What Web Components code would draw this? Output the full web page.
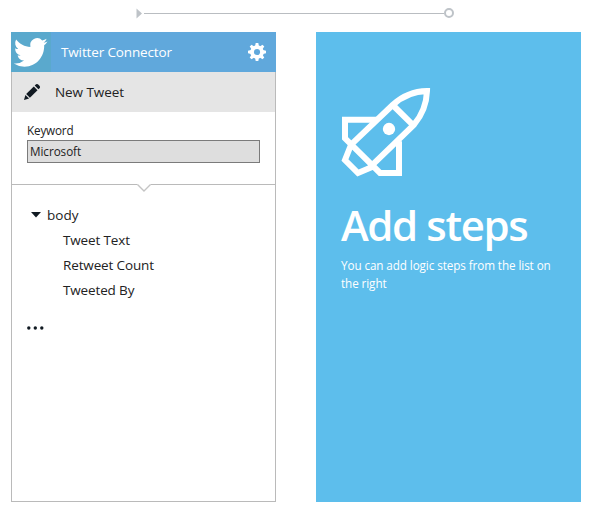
<!DOCTYPE html>
<html lang="en"><head><meta charset="utf-8"><title>Logic steps</title>
<style>
html,body{margin:0;background:#fff}
body{width:591px;height:512px;overflow:hidden;font-family:"Open Sans","Noto Sans",sans-serif;color:#222}
</style></head><body>
<flow-board>
<flow-connector slot="connector"></flow-connector>
<connector-card name="Twitter Connector" action="New Tweet">
<keyword-field label="Keyword" value="Microsoft"></keyword-field>
<output-tree slot="outputs" name="body">
<tree-item>Tweet Text</tree-item><tree-item>Retweet Count</tree-item><tree-item>Tweeted By</tree-item>
</output-tree>
</connector-card>
<steps-card><span slot="title">Add steps</span>You can add logic steps from the list on the right</steps-card>
</flow-board>
<script>
const define=(name,render)=>customElements.define(name,class extends HTMLElement{
  constructor(){super();this.attachShadow({mode:'open'}).innerHTML=render(this)}
});
define('flow-board',()=>`<style>
:host{display:grid;grid-template:32px 470px/265px 265px;column-gap:40px;padding:0 10px 10px 11px;box-sizing:border-box}
.top{grid-column:1/3}</style><div class="top"><slot name="connector"></slot></div><slot></slot>`);
define('flow-connector',()=>`<style>:host{display:block;height:32px;padding-left:125px}svg{display:block}</style>
<svg width="320" height="32"><path d="M.5 8.5L6 13.5L.5 18.5Z" fill="#bec3c8"/><path d="M8 13.5H308" stroke="#b9bdc1"/><circle cx="313" cy="13" r="4" fill="#fff" stroke="#bec3c8" stroke-width="2"/></svg>`);
define('connector-card',el=>`<style>
:host{display:flex;flex-direction:column;box-sizing:border-box;border:1px solid #bababa;border-top:0;background:#fff}
header{display:flex;align-items:center;height:40px;margin:0 -1px;background:#60a8dc;color:#fff;font-size:13.5px;flex:none}
.logo{width:40px;height:40px;background:#5aa9cd}svg{display:block}
.name{margin-left:10px;letter-spacing:-.14px;flex:1}.gear{margin-right:9px}
.action{display:flex;align-items:center;height:40px;background:#e5e5e5;font-size:13.5px;flex:none}
.action span{margin-left:14px;letter-spacing:-.08px}.action svg{margin-left:11px}
.input{height:72px;flex:none}.sep{height:8px;flex:none}
</style><header><svg class="logo" viewBox="0 0 40 40"><path fill="#fff" transform="translate(2.8 2.9) scale(1.41 1.46)" d="M23.95 4.57a10 10 0 0 1-2.82.77 4.96 4.96 0 0 0 2.16-2.72c-.95.56-2 .96-3.13 1.19a4.92 4.92 0 0 0-8.39 4.48C7.69 8.1 4.07 6.13 1.64 3.16a4.92 4.92 0 0 0 1.52 6.57 4.9 4.9 0 0 1-2.23-.61v.06a4.92 4.92 0 0 0 3.95 4.83 5 5 0 0 1-2.21.08 4.94 4.94 0 0 0 4.6 3.42A9.87 9.87 0 0 1 0 19.54a13.94 13.94 0 0 0 7.55 2.21c9.05 0 14-7.5 14-13.98l-.02-.64a9.94 9.94 0 0 0 2.42-2.56z"/></svg>
<span class="name">${el.getAttribute('name')}</span>
<svg class="gear" width="20" height="20" viewBox="-10 -10 20 20"><g fill="#fff"><g id="t"><path d="M-1.9-6L-1.3-9H1.3L1.9-6V6L1.3 9H-1.3L-1.9 6Z"/></g><use href="#t" transform="rotate(45)"/><use href="#t" transform="rotate(90)"/><use href="#t" transform="rotate(135)"/><circle r="6.8"/></g><circle r="3.1" fill="#60a8dc"/></svg></header>
<div class="action"><svg width="18" height="18" viewBox="0 0 18 18"><g fill="#111a22"><path d="M1 17L2.4 11.9L6.1 15.6Z"/><path d="M3.2 11.1L10.8 3.5L14.5 7.2L6.9 14.8Z"/><path d="M11.7 2.6L13.1 1.2Q14 .6 14.9 1.3L16.7 3.1Q17.4 4 16.8 4.9L15.4 6.3Z"/></g></svg><span>${el.getAttribute('action')}</span></div>
<div class="input"><slot></slot></div>
<svg class="sep" width="263" height="8"><path d="M0 .5H125.5M138.5 .5H263" fill="none" stroke="#bababa"/><path d="M125.5 .5L132 7L138.5 .5" fill="none" stroke="#c4c4c4" stroke-width="1.4"/></svg>
<slot name="outputs"></slot>`);
define('keyword-field',el=>`<style>
:host{display:block;padding:10px 15px 0;font-size:11.7px}label{display:block;height:18px;line-height:17px;letter-spacing:-.17px}
input{display:block;box-sizing:border-box;width:233px;height:23px;border:1px solid #7b7b7b;background:#dedede;padding:0 2px 2px;font:inherit;color:inherit;letter-spacing:-.05px;outline:0;border-radius:0}
</style><label for="k">${el.getAttribute('label')}</label><input id="k" value="${el.getAttribute('value')}">`);
define('output-tree',el=>`<style>
:host{display:block;padding:10.5px 15px 0;font-size:13.5px;line-height:25px}
.root{display:flex;align-items:center}.root svg{margin:0 6px 0 4px}.items{padding-left:36px}.more{display:block;margin-top:23px}
</style><div class="root"><svg width="10" height="6"><path d="M0 0H10L5 5.5Z" fill="#111a22"/></svg>${el.getAttribute('name')}</div><div class="items"><slot></slot></div>
<svg class="more" width="17" height="4"><g fill="#111a22"><circle cx="1.8" cy="2" r="1.7"/><circle cx="8.3" cy="2" r="1.7"/><circle cx="14.8" cy="2" r="1.7"/></g></svg>`);
define('tree-item',()=>`<style>:host{display:block;letter-spacing:-.14px}</style><slot></slot>`);
define('steps-card',()=>`<style>
:host{display:block;box-sizing:border-box;padding:48px 25px 0 14px;background:#5dbeec;color:#fff;font-size:11.7px;line-height:18px}
svg{display:block}h2{margin:11px 0 2px 11px;font-size:42px;line-height:58px;font-weight:600;letter-spacing:-1.4px;white-space:nowrap}p{margin:0 0 0 11px;width:222px;letter-spacing:-.09px}
</style><svg width="110" height="105" viewBox="0 0 330 315"><g fill="none" stroke="#fff" stroke-width="18" stroke-miterlimit="10"><path d="M61 196L188 75Q232 34 291 33Q289 90 252 134L128 254"/><path d="M188 75L250 136M140 119H45V175L150 279H207V184M64 192L45 240L84 279L135 257"/></g><circle cx="177" cy="147" r="18.5" fill="#fff"/></svg>
<h2><slot name="title"></slot></h2><p><slot></slot></p>`);
</script></body></html>
